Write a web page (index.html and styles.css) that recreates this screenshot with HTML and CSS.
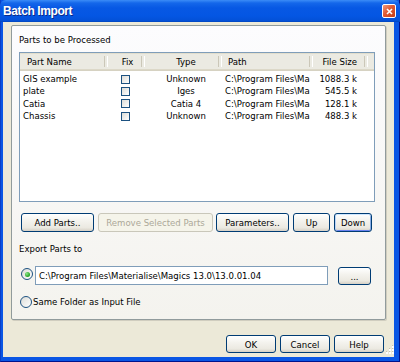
FILE: index.html
```html
<!DOCTYPE html>
<html lang="en">

<head>
    <meta charset="UTF-8">
    <title>Batch Import</title>
    <link rel="stylesheet" href="styles.css">
</head>

<body>

    <div class="window">

        <div class="titlebar">
            <span class="title">Batch Import</span>
            <span class="close">
                <svg width="7" height="7" viewBox="0 0 7 7">
                    <path d="M1 1 L6 6 M6 1 L1 6" stroke="#fff" stroke-width="1.6" />
                </svg>
            </span>
        </div>

        <div class="client">

            <div class="panel">

                <div class="caption">Parts to be Processed</div>

                <div class="list">
                    <div class="row head">
                        <div class="cell name">Part Name</div>
                        <div class="cell fix">Fix</div>
                        <div class="cell type">Type</div>
                        <div class="cell path">Path</div>
                        <div class="cell size">File Size</div>
                        <div class="cell rest"></div>
                    </div>
                    <div class="rows">
                        <div class="row">
                            <div class="cell name">GIS example</div>
                            <div class="cell fix"><span class="check"></span></div>
                            <div class="cell type">Unknown</div>
                            <div class="cell path">C:\Program Files\Ma</div>
                            <div class="cell size">1088.3 k</div>
                        </div>
                        <div class="row">
                            <div class="cell name">plate</div>
                            <div class="cell fix"><span class="check"></span></div>
                            <div class="cell type">Iges</div>
                            <div class="cell path">C:\Program Files\Ma</div>
                            <div class="cell size">545.5 k</div>
                        </div>
                        <div class="row">
                            <div class="cell name">Catia</div>
                            <div class="cell fix"><span class="check"></span></div>
                            <div class="cell type">Catia 4</div>
                            <div class="cell path">C:\Program Files\Ma</div>
                            <div class="cell size">128.1 k</div>
                        </div>
                        <div class="row">
                            <div class="cell name">Chassis</div>
                            <div class="cell fix"><span class="check"></span></div>
                            <div class="cell type">Unknown</div>
                            <div class="cell path">C:\Program Files\Ma</div>
                            <div class="cell size">488.3 k</div>
                        </div>
                    </div>
                </div>

                <div class="toolbar">
                    <button class="btn add">Add Parts..</button>
                    <button class="btn remove" disabled>Remove Selected Parts</button>
                    <button class="btn params">Parameters..</button>
                    <button class="btn up">Up</button>
                    <button class="btn down focused">Down</button>
                </div>

                <div class="caption export">Export Parts to</div>

                <div class="dest">
                    <span class="radio on"></span>
                    <div class="field">C:\Program Files\Materialise\Magics 13.0\13.0.01.04</div>
                    <button class="btn browse">...</button>
                </div>

                <div class="same">
                    <span class="radio"></span>
                    <span>Same Folder as Input File</span>
                </div>

            </div>

            <div class="footer">
                <button class="btn dlg">OK</button>
                <button class="btn dlg">Cancel</button>
                <button class="btn dlg">Help</button>
            </div>

        </div>

        <svg class="grip" width="11" height="11" viewBox="0 0 11 11">
            <g fill="#fff">
                <rect x="9" y="1" width="2" height="2" /><rect x="6" y="4" width="2" height="2" />
                <rect x="9" y="4" width="2" height="2" /><rect x="3" y="7" width="2" height="2" />
                <rect x="6" y="7" width="2" height="2" /><rect x="9" y="7" width="2" height="2" />
            </g>
            <g fill="#c5c2b2">
                <rect x="9" y="0" width="1" height="1" /><rect x="6" y="3" width="1" height="1" />
                <rect x="9" y="3" width="1" height="1" /><rect x="3" y="6" width="1" height="1" />
                <rect x="6" y="6" width="1" height="1" /><rect x="9" y="6" width="1" height="1" />
            </g>
        </svg>

    </div>

</body>

</html>
```

FILE: styles.css
```css
* {
    box-sizing: border-box;
}

body {
    margin: 0;
    background: #fff;
}

.window {
    position: relative;
    width: 400px;
    height: 362px;
    display: flex;
    flex-direction: column;
    background: #0a56e4;
    border-left: 1px solid #0b3fc6;
    border-bottom: 1px solid #00138c;
    border-right: 1px solid #00138c;
    font-family: "DejaVu Sans Condensed", "Liberation Sans", sans-serif;
    font-size: 9.5px;
    color: #000;
}

.titlebar {
    height: 22px;
    margin-left: -1px;
    margin-right: -1px;
    display: flex;
    align-items: center;
    justify-content: space-between;
    padding: 0 4px 0 3px;
    background: linear-gradient(#3b8cf7 0, #1467ea 3px, #0758e4 8px, #0456e3 16px, #0350d6 21px, #0142b6 22px);
    border-radius: 6px 6px 0 0;
}

.title {
    color: #fff;
    font-family: "Liberation Sans", Arial, sans-serif;
    font-weight: bold;
    font-size: 12px;
    letter-spacing: -0.4px;
    text-shadow: 1px 1px 0 #0a2a8a;
}

.close {
    width: 14px;
    height: 14px;
    display: flex;
    align-items: center;
    justify-content: center;
    border: 1px solid #fff;
    border-radius: 2px;
    background: linear-gradient(135deg, #f09a7d 0, #e05a34 45%, #c23d16 100%);
}

.client {
    flex: 1;
    margin: 0 5px 4px 2px;
    background: #ece9d8;
    display: flex;
    flex-direction: column;
}

.panel {
    margin: 3px 0 0 8px;
    width: 375px;
    height: 295px;
    padding: 0 7px;
    border: 1px solid #919b9c;
    border-radius: 2px;
    box-shadow: 1px 1px 0 #d0cdbf;
    background: linear-gradient(#fcfcfe, #f4f3ee);
}

.caption {
    margin-top: 8px;
    height: 12px;
    line-height: 12px;
}

.list {
    margin-top: 6px;
    width: 356px;
    height: 150px;
    border: 1px solid #7f9db9;
    background: #fff;
    overflow: hidden;
}

.rows {
    padding-top: 2px;
}

.row {
    display: flex;
    height: 12.33px;
    line-height: 12px;
}

.row.head {
    height: 18px;
    line-height: 16px;
    background: #ebeae2;
    border-bottom: 1px solid #d6d2c2;
    box-shadow: 0 1px 0 #e2decd inset, 0 -1px 0 #dcd8c8 inset;
}

.cell {
    flex: none;
    white-space: nowrap;
    overflow: hidden;
}

.head .cell {
    position: relative;
    padding-top: 1px;
}

.head .cell::after {
    content: "";
    position: absolute;
    right: 0;
    top: 3px;
    bottom: 3px;
    width: 2px;
    border-left: 1px solid #cbc7b8;
    border-right: 1px solid #fff;
}

.head .rest::after {
    display: none;
}

.name {
    width: 88px;
    padding-left: 3px;
}

.head .name {
    padding-left: 7px;
}

.fix {
    width: 37px;
    text-align: center;
    display: flex;
    align-items: center;
    justify-content: center;
}

.head .fix {
    display: block;
    padding-left: 2px;
}

.type {
    width: 77px;
    text-align: center;
    padding-left: 5px;
}

.path {
    width: 91px;
    padding-left: 3px;
}

.head .path {
    padding-left: 6px;
}

.size {
    width: 55px;
    text-align: right;
    padding-right: 11px;
}

.rest {
    width: 8px;
}

.check {
    width: 9px;
    height: 9px;
    margin-left: -2px;
    border: 1px solid #1c5180;
    background: linear-gradient(135deg, #dcdcd7, #fff);
}

.toolbar {
    margin-top: 11px;
    padding-left: 2px;
    display: flex;
    gap: 4px;
}

.btn {
    height: 19px;
    padding: 0;
    font-family: inherit;
    font-size: 9.5px;
    color: #000;
    border: 1px solid #003c74;
    border-radius: 3px;
    background: linear-gradient(#fff 0, #f4f3ee 40%, #ebe9e1 80%, #d6d0c5 100%);
}

.btn:disabled {
    color: #aca899;
    border-color: #c9c7ba;
    background: #f5f4ea;
}

.btn.focused {
    box-shadow: inset 0 1px 0 #cee7ff, inset 1px 0 0 #bcd4f6, inset -1px 0 0 #89ade4, inset 0 -1px 0 #6982ee;
}

.add {
    width: 73px;
}

.remove {
    width: 115px;
}

.params {
    width: 73px;
    margin-left: -1px;
}

.up {
    width: 37px;
}

.down {
    width: 38px;
}

.export {
    margin-top: 11px;
}

.dest {
    margin-top: 11px;
    padding-left: 2px;
    display: flex;
    align-items: center;
}

.radio {
    flex: none;
    width: 12px;
    height: 12px;
    border: 1px solid #1c5180;
    border-radius: 50%;
    background: linear-gradient(135deg, #dcdcd7, #fff);
    display: flex;
    align-items: center;
    justify-content: center;
}

.dest .radio {
    margin-top: -3px;
}

.radio.on::after {
    content: "";
    width: 5px;
    height: 5px;
    border-radius: 50%;
    background: radial-gradient(circle at 35% 35%, #8ee68a, #21a121 70%);
}

.field {
    margin-left: 2px;
    width: 293px;
    height: 19px;
    line-height: 17px;
    padding-left: 3px;
    border: 1px solid #7f9db9;
    background: #fff;
    white-space: nowrap;
    overflow: hidden;
}

.browse {
    margin-left: 10px;
    width: 33px;
    height: 18px;
    margin-top: 1px;
}

.same {
    margin-top: 11px;
    padding-left: 1px;
    display: flex;
    align-items: center;
    gap: 1px;
    height: 12px;
    line-height: 12px;
}

.footer {
    margin-top: auto;
    margin-bottom: 4px;
    padding-right: 10px;
    display: flex;
    justify-content: flex-end;
    gap: 4px;
}

.dlg {
    width: 50px;
    height: 18px;
}

.grip {
    position: absolute;
    right: 5px;
    bottom: 5px;
}
```
